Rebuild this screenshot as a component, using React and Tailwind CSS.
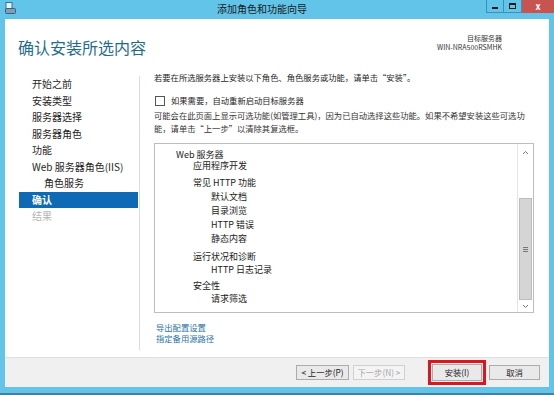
import React from "react";

const NAV = [
  { label: "开始之前" },
  { label: "安装类型" },
  { label: "服务器选择" },
  { label: "服务器角色" },
  { label: "功能" },
  { label: "Web 服务器角色(IIS)" },
  { label: "角色服务", sub: true },
  { label: "确认", active: true },
  { label: "结果", disabled: true },
];

// l: indent level, m: extra space above the row
const ITEMS = [
  { t: "Web 服务器", l: 0, m: 0 },
  { t: "应用程序开发", l: 1, m: -1 },
  { t: "常见 HTTP 功能", l: 1, m: 5 },
  { t: "默认文档", l: 2, m: 2 },
  { t: "目录浏览", l: 2, m: 2 },
  { t: "HTTP 错误", l: 2, m: 2 },
  { t: "静态内容", l: 2, m: 2 },
  { t: "运行状况和诊断", l: 1, m: 6 },
  { t: "HTTP 日志记录", l: 2, m: 1 },
  { t: "安全性", l: 1, m: 4 },
  { t: "请求筛选", l: 2, m: 1 },
];

const indent = ["pl-[21px]", "pl-[38px]", "pl-[56px]"];

export default function App() {
  return (
    <div
      className="w-[554px] h-[395px] bg-[#62c4e8] flex flex-col overflow-hidden text-[#1e1e1e]"
      style={{ fontFamily: '"Noto Sans CJK SC", "Noto Sans", sans-serif' }}
    >
      {/* title bar */}
      <div className="h-[19px] flex items-start relative shrink-0">
        <svg className="absolute left-[5px] top-[2px]" width="11" height="12" viewBox="0 0 11 12">
          <rect x="1" y="0.5" width="6" height="6" fill="#e8f4fb" stroke="#3a6f9a" strokeWidth="1" />
          <rect x="0.5" y="6.5" width="10" height="5" rx="1" fill="#7f9fb8" stroke="#3a5f7f" />
        </svg>
        <div className="flex-1 pr-[30px] text-center text-[10px] leading-[18px] text-[#1a1a1a]">添加角色和功能向导</div>
        <div className="absolute right-0 top-0 flex">
          <div className="w-[18px] h-[13px] border border-[#3d8fb3] border-t-0 flex items-center justify-center">
            <div className="w-[6px] h-[2px] bg-[#1a1a1a] mt-[3px]" />
          </div>
          <div className="w-[18px] h-[13px] border border-[#3d8fb3] border-t-0 border-l-0 flex items-center justify-center">
            <div className="w-[7px] h-[6px] border-[1.5px] border-t-[2px] border-[#1a1a1a]" />
          </div>
          <div className="w-[32px] h-[13px] bg-[#c75450] flex items-center justify-center text-white text-[9px] font-bold leading-none">
            x
          </div>
        </div>
      </div>

      {/* client */}
      <div className="mx-[5px] flex-1 bg-white flex flex-col">
        {/* header */}
        <div className="h-[46px] flex items-start justify-between shrink-0">
          <div className="pl-[13px] pt-[18px] text-[16px] leading-[20px] text-[#1f6d8c]">确认安装所选内容</div>
          <div className="pr-[47px] pt-[15px] text-right text-[7px] leading-[9px] text-[#333]">
            <div>目标服务器</div>
            <div>WIN-NRA500RSMHK</div>
          </div>
        </div>

        {/* body */}
        <div className="flex-1 flex">
          {/* nav */}
          <div className="w-[135px] shrink-0 pl-[14px] pt-[11px] pb-[7px] flex">
            <div className="flex-1 border-r border-[#dcdcdc] pr-[1px] text-[10px]">
              {NAV.map((n) => (
                <div
                  key={n.label}
                  className={
                    "h-[16.5px] leading-[16.5px] " +
                    (n.sub ? "pl-[25px] " : "pl-[13px] ") +
                    (n.active ? "bg-[#0e6ab4] text-white font-bold " : "") +
                    (n.disabled ? "text-[#b4b4b4] " : "")
                  }
                >
                  {n.label}
                </div>
              ))}
            </div>
          </div>

          {/* content */}
          <div className="flex-1 pl-[14px] pr-[15px] pt-[6px] text-[8.3px] leading-[13px]">
            <div>若要在所选服务器上安装以下角色、角色服务或功能，请单击“安装”。</div>
            <label className="flex items-center mt-[10px]">
              <span className="w-[10px] h-[10px] border border-[#555] bg-white ml-[1px] mr-[6px]" />
              <span>如果需要，自动重新启动目标服务器</span>
            </label>
            <div className="mt-[2px] text-[#333] leading-[12.5px]">
              可能会在此页面上显示可选功能(如管理工具)，因为已自动选择这些功能。如果不希望安装这些可选功能，请单击“上一步”以清除其复选框。
            </div>

            {/* list box */}
            <div className="mt-[9px] h-[170px] border border-[#bdbdbd] flex">
              <div className="flex-1 pt-[5px] text-[9px] text-[#222]">
                {ITEMS.map((it) => (
                  <div
                    key={it.t}
                    className={indent[it.l] + " leading-[12px]"}
                    style={{ marginTop: it.m }}
                  >
                    {it.t}
                  </div>
                ))}
              </div>
              <div className="w-[16px] border-l border-[#e4e4e4] flex flex-col items-stretch">
                <div className="h-[16px] flex items-center justify-center">
                  <svg width="7" height="5" viewBox="0 0 7 5"><path d="M1 4 L3.5 1.5 L6 4" fill="none" stroke="#777" strokeWidth="1" /></svg>
                </div>
                <div className="h-[38px]" />
                <div className="flex-1 mx-[1px] bg-[#d5d5d5] border border-[#bcbcbc] flex items-center justify-center">
                  <div className="flex flex-col gap-[1px]">
                    <div className="w-[5px] h-[1px] bg-[#777]" />
                    <div className="w-[5px] h-[1px] bg-[#777]" />
                    <div className="w-[5px] h-[1px] bg-[#777]" />
                  </div>
                </div>
                <div className="h-[12px] flex items-center justify-center">
                  <svg width="7" height="5" viewBox="0 0 7 5"><path d="M1 1 L3.5 3.5 L6 1" fill="none" stroke="#777" strokeWidth="1" /></svg>
                </div>
              </div>
            </div>

            <div className="mt-[9px] pl-[2px] text-[#2a73a8] leading-[11px]">
              <div>导出配置设置</div>
              <div>指定备用源路径</div>
            </div>
          </div>
        </div>

        {/* footer */}
        <div className="h-[30px] shrink-0 bg-[#f0f0f0] border-t border-[#dfdfdf] flex items-center justify-end pr-[9px] text-[8.3px]">
          <div className="w-[53px] h-[15px] border border-[#acacac] bg-[#e9e9e9] flex items-center justify-center">
            &lt; 上一步(P)
          </div>
          <div className="w-[52px] h-[15px] ml-[4px] border border-[#d0d0d0] bg-[#f4f4f4] text-[#a8a8a8] flex items-center justify-center">
            下一步(N) &gt;
          </div>
          <div className="ml-[23px] w-[58px] h-[25px] border-[3px] border-[#e0141e] flex items-center justify-center">
            <div className="w-[50px] h-[17px] border border-[#acacac] bg-[#e9e9e9] flex items-center justify-center">
              安装(I)
            </div>
          </div>
          <div className="w-[51px] h-[15px] ml-[3px] border border-[#acacac] bg-[#e9e9e9] flex items-center justify-center">
            取消
          </div>
        </div>
      </div>

      {/* bottom frame */}
      <div className="h-[8px] shrink-0 flex flex-col">
        <div className="h-[6px]" />
        <div className="h-[2px] bg-[#4a7f97]" />
      </div>
    </div>
  );
}
